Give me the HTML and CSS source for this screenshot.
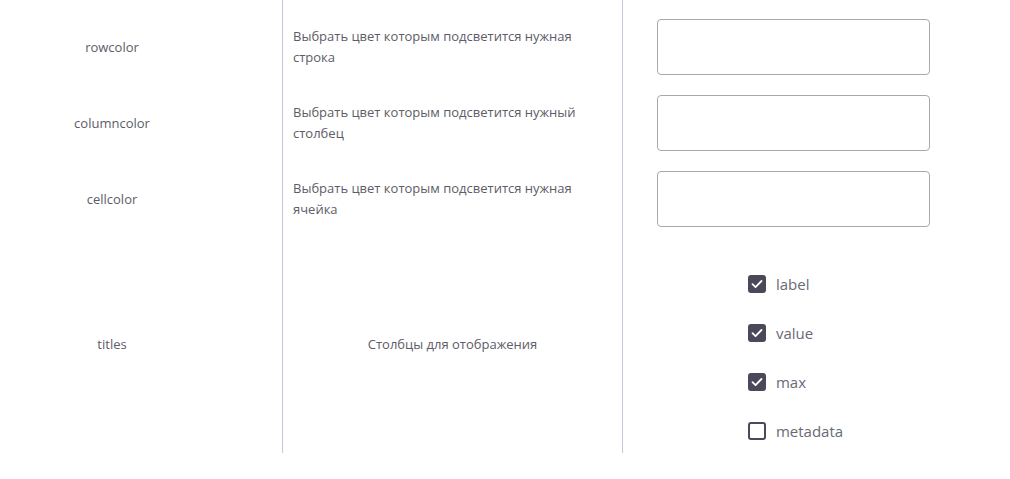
FILE: index.html
```html
<!DOCTYPE html>
<html lang="ru">
<head>
<meta charset="utf-8">
<link rel="stylesheet" href="styles.css">
</head>
<body>
<div class="table">
  <div class="row first">
    <div class="cell name">rowcolor</div>
    <div class="cell desc">Выбрать цвет которым подсветится нужная строка</div>
    <div class="cell ctrl"><div class="input"></div></div>
  </div>
  <div class="row">
    <div class="cell name">columncolor</div>
    <div class="cell desc">Выбрать цвет которым подсветится нужный столбец</div>
    <div class="cell ctrl"><div class="input"></div></div>
  </div>
  <div class="row">
    <div class="cell name">cellcolor</div>
    <div class="cell desc">Выбрать цвет которым подсветится нужная ячейка</div>
    <div class="cell ctrl"><div class="input"></div></div>
  </div>
  <div class="row tall">
    <div class="cell name">titles</div>
    <div class="cell desc center">Столбцы для отображения</div>
    <div class="cell ctrl">
      <div class="checks">
        <label class="check"><span class="box on"><svg viewBox="0 0 18 18" width="18" height="18"><path d="M4.5 9.2l3 3 6-6.2" fill="none" stroke="#fff" stroke-width="1.8" stroke-linecap="round" stroke-linejoin="round"/></svg></span>label</label>
        <label class="check"><span class="box on"><svg viewBox="0 0 18 18" width="18" height="18"><path d="M4.5 9.2l3 3 6-6.2" fill="none" stroke="#fff" stroke-width="1.8" stroke-linecap="round" stroke-linejoin="round"/></svg></span>value</label>
        <label class="check"><span class="box on"><svg viewBox="0 0 18 18" width="18" height="18"><path d="M4.5 9.2l3 3 6-6.2" fill="none" stroke="#fff" stroke-width="1.8" stroke-linecap="round" stroke-linejoin="round"/></svg></span>max</label>
        <label class="check"><span class="box"></span>metadata</label>
      </div>
    </div>
  </div>
</div>
</body>
</html>
```
FILE: styles.css
```css
html, body {
  margin: 0;
  padding: 0;
  background: #fff;
}
body {
  font-family: "Open Sans", "Noto Sans", sans-serif;
  color: #5d5c68;
}
.table {
  width: 964px;
  display: flex;
  flex-direction: column;
}
.row {
  display: grid;
  grid-template-columns: 283px 340px 341px;
  height: 76px;
}
.row.first {
  height: 85px;
}
.row.tall {
  height: 216px;
}
.cell {
  display: flex;
  align-items: center;
  box-sizing: border-box;
}
.name {
  justify-content: center;
  padding-right: 58px;
  font-size: 13px;
  border-right: 1px solid #c8c6da;
}
.row.first .cell {
  padding-top: 9px;
}
.row.tall .name,
.row.tall .desc {
  padding-bottom: 2px;
}
.desc {
  padding: 0 20px 0 10px;
  font-size: 13px;
  line-height: 21px;
  border-right: 1px solid #c8c6da;
}
.row.first .desc {
  padding-top: 8px;
}
.desc.center {
  justify-content: center;
  padding-left: 0;
  padding-right: 0;
  font-size: 13px;
}
.ctrl {
  justify-content: center;
}
.input {
  width: 273px;
  height: 56px;
  box-sizing: border-box;
  border: 1px solid #a9a8b1;
  border-radius: 4px;
}
.checks {
  display: flex;
  flex-direction: column;
  gap: 31px;
  margin-left: 4px;
  margin-top: 24px;
}
.check {
  display: flex;
  align-items: center;
  gap: 10px;
  font-size: 15px;
  line-height: 18px;
  color: #6a6976;
}
.box {
  width: 18px;
  height: 18px;
  box-sizing: border-box;
  border: 2px solid #4b4959;
  border-radius: 3px;
  display: flex;
  align-items: center;
  justify-content: center;
}
.box.on {
  background: #4b4959;
  border: none;
}
.box svg {
  display: block;
}
```
